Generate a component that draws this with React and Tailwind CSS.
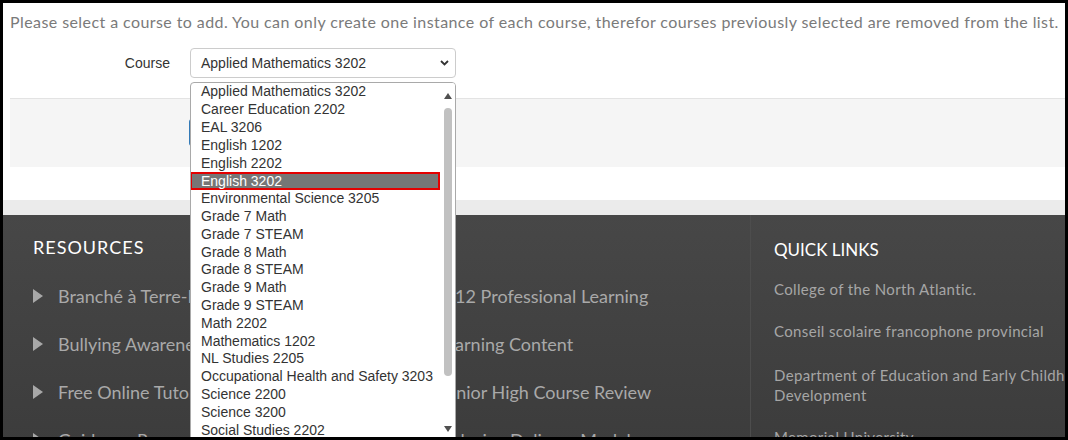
import React from "react";

const courses = [
  "Applied Mathematics 3202",
  "Career Education 2202",
  "EAL 3206",
  "English 1202",
  "English 2202",
  "English 3202",
  "Environmental Science 3205",
  "Grade 7 Math",
  "Grade 7 STEAM",
  "Grade 8 Math",
  "Grade 8 STEAM",
  "Grade 9 Math",
  "Grade 9 STEAM",
  "Math 2202",
  "Mathematics 1202",
  "NL Studies 2205",
  "Occupational Health and Safety 3203",
  "Science 2200",
  "Science 3200",
  "Social Studies 2202",
];

const resources = [
  ["Branché à Terre-Neuve-et-Labrador", "K-12 Professional Learning"],
  ["Bullying Awareness", "Learning Content"],
  ["Free Online Tutoring", "Senior High Course Review"],
  ["Guidance Resources", "Inclusive Delivery Model"],
];

function Tri() {
  return (
    <svg width="10" height="14" viewBox="0 0 10 14" className="shrink-0">
      <polygon points="0,0 10,7 0,14" fill="#a8a8a8" />
    </svg>
  );
}

export default function App() {
  return (
    <div className="w-[1068px] h-[440px] border-[3px] border-black bg-white overflow-hidden relative font-['Liberation_Sans',Arial,sans-serif]">
      <p className="pl-[7px] pt-[8px] text-[16px] leading-[22px] tracking-[0.42px] text-[#7a7a7a] font-['Lato',sans-serif] whitespace-nowrap">
        Please select a course to add. You can only create one instance of each course, therefor courses previously selected are removed from the list.
      </p>

      <div className="mt-[15px] flex items-center h-[30px]">
        <div className="w-[167px] text-right text-[14px] text-[#333]">Course</div>
        <div className="ml-[20px] w-[266px] h-[30px] border border-[#cccccc] rounded-[4px] flex items-center justify-between pl-[10px] pr-[6px] text-[14px] text-[#333]">
          <span>Applied Mathematics 3202</span>
          <svg width="9" height="6" viewBox="0 0 9 6">
            <polyline points="1,1 4.5,4.5 8,1" fill="none" stroke="#333" strokeWidth="1.8" />
          </svg>
        </div>
      </div>

      <div className="mt-[20px] ml-[7px] h-[69px] bg-[#f5f5f5] border-t border-[#e3e3e3] pt-[20px] pl-[179px]">
        <div className="w-[60px] h-[27px] bg-[#337ab7] rounded-[3px]" />
      </div>

      <div className="mt-[33px] h-[15px] bg-[#ebebeb]" />

      <div className="h-[230px] bg-gradient-to-b from-[#474747] to-[#3c3c3c] flex font-['Lato',sans-serif]">
        <div className="w-[747px] shrink-0 pl-[30px] pt-[20px]">
          <div className="text-[18px] leading-[24px] tracking-[1px] text-white">RESOURCES</div>
          <div className="mt-[25px] flex flex-col gap-[24px]">
            {resources.map(([a, b]) => (
              <div key={a} className="flex h-[24px] items-center">
                <div className="w-[379px] shrink-0 flex items-center gap-[15px]">
                  <Tri />
                  <span className="text-[18px] leading-[24px] text-[#a9a9a9] whitespace-nowrap">{a}</span>
                </div>
                <div className="flex items-center gap-[15px]">
                  <Tri />
                  <span className="text-[18px] leading-[24px] text-[#a9a9a9] whitespace-nowrap">{b}</span>
                </div>
              </div>
            ))}
          </div>
        </div>
        <div className="w-[360px] shrink-0 border-l border-[#4d4d4d] pl-[23px] pt-[23px]">
          <div className="text-[17px] leading-[24px] text-white">QUICK LINKS</div>
          <div className="mt-[17px] text-[15px] leading-[20px] tracking-[0.35px] text-[#a6a6a6]">College of the North Atlantic.</div>
          <div className="mt-[22px] text-[15px] leading-[20px] tracking-[0.35px] text-[#a6a6a6]">Conseil scolaire francophone provincial</div>
          <div className="mt-[24px] text-[15px] leading-[20px] tracking-[0.35px] text-[#a6a6a6]">Department of Education and Early Childhood Development</div>
          <div className="mt-[22px] text-[15px] leading-[20px] tracking-[0.35px] text-[#a6a6a6]">Memorial University</div>
        </div>
      </div>

      <div className="absolute left-[187px] top-[79px] w-[266px] h-[370px] bg-white border border-[#a9a9a9] rounded-t-[4px] overflow-hidden">
        <div className="w-[249px]">
          {courses.map((c) =>
            c === "English 3202" ? (
              <div key={c} className="h-[17.8px] leading-[14px] pl-[9px] bg-[#767676] text-white text-[14px] border-2 border-[#e40000] flex items-center -ml-[1px] w-[250px] whitespace-nowrap">
                {c}
              </div>
            ) : (
              <div key={c} className="h-[17.8px] pl-[10px] text-[14px] text-[#333] flex items-center whitespace-nowrap">
                {c}
              </div>
            )
          )}
        </div>
        <div className="absolute right-0 top-0 w-[15px] h-full bg-white flex flex-col items-center">
          <svg width="8" height="6" viewBox="0 0 8 6" className="mt-[10px]">
            <polygon points="4,0 8,6 0,6" fill="#505050" />
          </svg>
          <div className="mt-[9px] w-[8px] h-[268px] rounded-full bg-[#c1c1c1]" />
          <svg width="8" height="6" viewBox="0 0 8 6" className="mt-[50px]">
            <polygon points="0,0 8,0 4,6" fill="#505050" />
          </svg>
        </div>
      </div>
    </div>
  );
}
